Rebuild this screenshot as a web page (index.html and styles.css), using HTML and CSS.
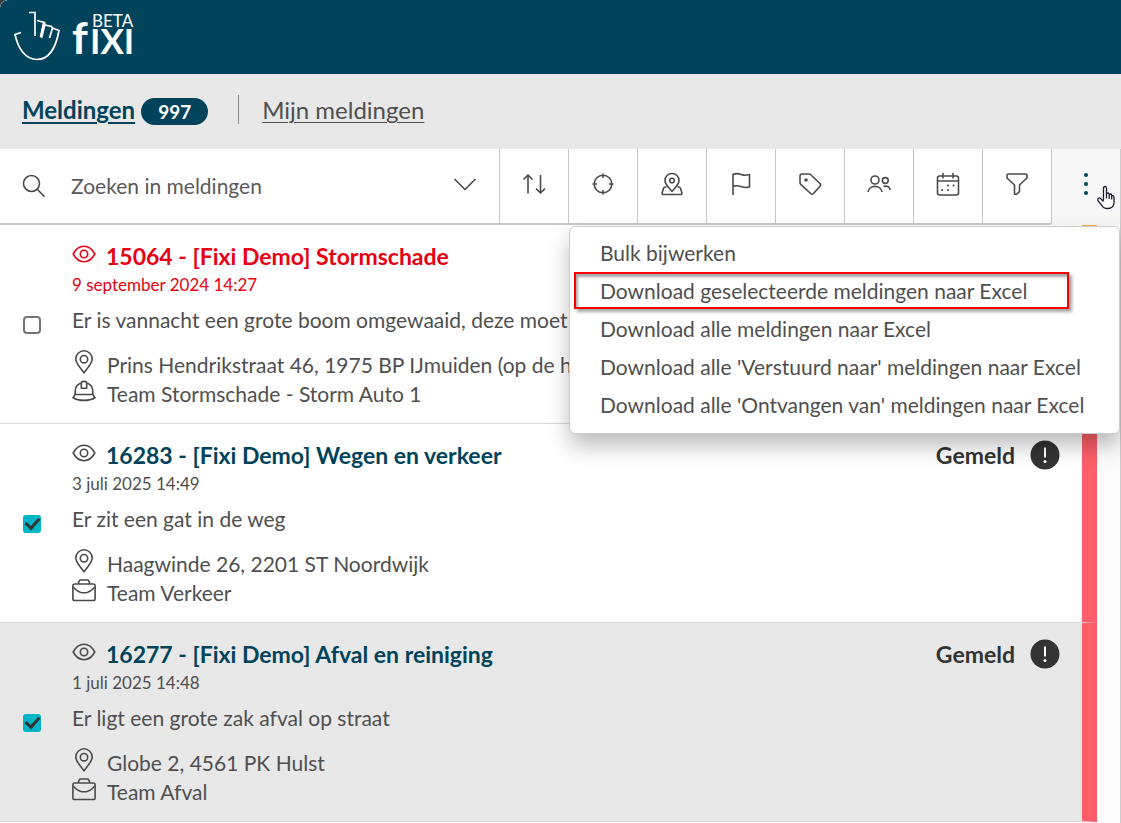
FILE: index.html
```html
<!DOCTYPE html>
<html lang="nl">
<head>
<meta charset="utf-8">
<meta name="viewport" content="width=device-width, initial-scale=1">
<title>Fixi - Meldingen</title>
<link rel="stylesheet" href="styles.css">
</head>
<body>
<svg width="0" height="0" class="sprite" aria-hidden="true">
  <symbol id="eye" viewBox="0 0 24 24"><path d="M1.2 12C4 6.800 8 4.300 12 4.300S20 6.800 22.800 12C20 17.200 16 19.700 12 19.700S4 17.200 1.200 12Z"/><circle cx="12" cy="12" r="3.700"/></symbol>
  <symbol id="pin" viewBox="0 0 24 24"><path d="M12 22.800C9 18.300 3.800 13.600 3.800 9A8.200 8.200 0 0 1 20.200 9C20.200 13.600 15 18.300 12 22.800Z"/><circle cx="12" cy="9.200" r="3.700"/></symbol>
  <symbol id="helmet" viewBox="0 0 24 24"><path d="M3.200 15.500V12.500A8.800 8.800 0 0 1 9.500 4M14.500 4A8.800 8.800 0 0 1 20.800 12.500V15.500M9.300 9.300V3.200Q12 1.500 14.700 3.200V9.300ZM3.200 15.500H20.800L23 18.700C17 22.300 7 22.300 1 18.700Z"/></symbol>
  <symbol id="bag" viewBox="0 0 24 24"><rect x=".9" y="6" width="22.200" height="16.500" rx="1.800"/><path d="M6.500 6V4.200L8 2H16L17.500 4.200V6M1 9C4 12 8 14.700 10 14.700H14C16 14.700 20 12 23 9"/></symbol>
  <symbol id="alert" viewBox="0 0 30 30"><circle cx="15" cy="15" r="14.500" fill="#333" stroke="none"/><path d="M15 7.500V17.500" stroke="#fff" stroke-width="2"/><circle cx="15" cy="21.500" r="1.500" fill="#fff" stroke="none"/></symbol>
</svg>

<header class="header">
  <svg class="logo" viewBox="0 0 124 52" role="img" aria-label="Fixi beta">
    <path d="M8 21.500L2 23.500C5 37 12 48.500 24 48.500S43 36 46 19.500L39.500 17L36.500 27M39.500 17L38.500 15.500L31.800 14L28.500 27M31.800 14L31.500 11.500L24 9.500M30.500 12L27.500 26M22 25V1.500H16" />
    <text class="logo-f" x="59" y="43">f</text>
    <text class="logo-ixi" x="77" y="43">IXI</text>
    <text class="logo-beta" x="79" y="16">BETA</text>
  </svg>
</header>

<nav class="tabs">
  <a class="tab tab-active" href="#meldingen">Meldingen</a>
  <span class="count">997</span>
  <a class="tab tab-other" href="#mijn">Mijn meldingen</a>
</nav>

<main class="panel">
  <div class="toolbar">
    <div class="search">
      <svg class="icon" viewBox="0 0 24 24" aria-hidden="true"><circle cx="9.500" cy="9.500" r="8"/><path d="M15.300 15.300L22.500 22.800"/></svg>
      <input class="search-input" type="text" aria-label="Zoeken in meldingen" placeholder="Zoeken in meldingen">
      <button class="expand" type="button" aria-label="Zoekopties"><svg class="icon" viewBox="0 0 24 24"><path d="M1.500 7L12 17.500L22.500 7"/></svg></button>
    </div>
    <button class="tool" type="button" aria-label="Sorteren"><svg class="icon" viewBox="0 0 24 24"><path d="M6 21.500V3M1.500 7.500L6 3L10.500 7.500M18.500 3V21M14 16.700L18.500 21L23 16.700"/></svg></button>
    <button class="tool" type="button" aria-label="Locatie"><svg class="icon" viewBox="0 0 24 24"><circle cx="12" cy="12" r="8.800"/><path d="M12 1.500V6M12 18V22.500M1.500 12H6M18 12H22.500"/></svg></button>
    <button class="tool" type="button" aria-label="Gebied"><svg class="icon" viewBox="0 0 24 24"><path d="M12 19.500C9 16 5 12.500 5 8.500A7 7 0 0 1 19 8.500C19 12.500 15 16 12 19.500Z"/><circle cx="12" cy="8.500" r="2.300"/><path d="M6.500 15H5.200Q4 15 3.600 16L2.200 20.500Q1.800 22.500 3.500 22.500H20.500Q22.200 22.500 21.800 20.500L20.400 16Q20 15 18.800 15H17.500"/></svg></button>
    <button class="tool" type="button" aria-label="Status"><svg class="icon" viewBox="0 0 24 24"><path d="M4 23V2.500C8 .5 11 2 13 2.700S17 3.500 20.500 2.500V15C17 16 15 15.500 12.500 14.700S8 13 4 14.500"/></svg></button>
    <button class="tool" type="button" aria-label="Categorie"><svg class="icon" viewBox="0 0 24 24"><path d="M2 4Q2 2 4 2H11Q12 2 13 3L22 11.500Q23.200 13 22 14.200L15.500 21.500Q14 23 12.600 21.500L3 12.700Q2 11.800 2 10.500Z"/><circle cx="8" cy="8" r="1" class="dot"/></svg></button>
    <button class="tool" type="button" aria-label="Behandelaars"><svg class="icon" viewBox="0 0 24 24"><circle cx="8" cy="8" r="4"/><circle cx="18.300" cy="8.500" r="2.900"/><path d="M1 20C2 12.500 14 12.500 15 20M16.500 14.500C20 13.500 22.500 14.500 23.200 18"/></svg></button>
    <button class="tool" type="button" aria-label="Datum"><svg class="icon" viewBox="0 0 24 24"><rect x="1.500" y="4" width="21" height="19" rx="2"/><path d="M1.500 9H22.500M7 1V6.500M17 1V6.500"/><path class="dots" d="M12 13.500H12.100M17.500 13.500H17.600M6 18H6.100M12 18H12.100"/></svg></button>
    <button class="tool" type="button" aria-label="Filter"><svg class="icon" viewBox="0 0 24 24"><path d="M3.500 2H20.500Q22 2 22 3.500V6L14.500 13V19.500L11.500 22.300H9.500V13L2 6V3.500Q2 2 3.500 2Z"/></svg></button>
    <button class="tool tool-more" type="button" aria-label="Meer acties" aria-expanded="true"><svg class="icon more" viewBox="0 0 24 24"><circle cx="12" cy="3" r="2"/><circle cx="12" cy="12" r="2"/><circle cx="12" cy="21" r="2"/></svg></button>
    <svg class="cursor" viewBox="0 0 18 24" aria-hidden="true"><path d="M6.500 15V3Q6.500 1 8 1T9.500 3V10V8.500Q9.500 7.500 10.800 7.500T12.200 9V10.500V9.500Q12.300 8.500 13.500 8.500T14.700 10V11Q15 10 16 10.200T17 12V17Q17 23 10.500 23Q6.500 23 5 20L1.200 15.500Q.3 13.500 1.500 12.700T4 13.500L6.500 16M9.500 9V13M12.200 10V13.500M14.700 11V14"/></svg>
    <div class="menu">
      <button class="menu-item" type="button">Bulk bijwerken</button>
      <button class="menu-item menu-item-marked" type="button">Download geselecteerde meldingen naar Excel</button>
      <button class="menu-item" type="button">Download alle meldingen naar Excel</button>
      <button class="menu-item" type="button">Download alle 'Verstuurd naar' meldingen naar Excel</button>
      <button class="menu-item" type="button">Download alle 'Ontvangen van' meldingen naar Excel</button>
    </div>
  </div>

  <div class="list">
    <article class="row row-late">
      <input class="check" type="checkbox" aria-label="Selecteer melding 15064">
      <div class="body">
        <h2 class="title"><svg class="icon"><use href="#eye"/></svg><a class="title-link" href="#15064">15064 - [Fixi Demo] Stormschade</a></h2>
        <p class="date">9 september 2024 14:27</p>
        <p class="desc">Er is vannacht een grote boom omgewaaid, deze moet</p>
        <p class="place"><svg class="icon"><use href="#pin"/></svg>Prins Hendrikstraat 46, 1975 BP IJmuiden (op de ho</p>
        <p class="team"><svg class="icon"><use href="#helmet"/></svg>Team Stormschade - Storm Auto 1</p>
      </div>
    </article>
    <article class="row">
      <input class="check" type="checkbox" checked aria-label="Selecteer melding 16283">
      <div class="body">
        <h2 class="title"><svg class="icon"><use href="#eye"/></svg><a class="title-link" href="#16283">16283 - [Fixi Demo] Wegen en verkeer</a></h2>
        <p class="date">3 juli 2025 14:49</p>
        <p class="desc">Er zit een gat in de weg</p>
        <p class="place"><svg class="icon"><use href="#pin"/></svg>Haagwinde 26, 2201 ST Noordwijk</p>
        <p class="team"><svg class="icon"><use href="#bag"/></svg>Team Verkeer</p>
      </div>
      <div class="status">Gemeld<svg class="alert"><use href="#alert"/></svg></div>
    </article>
    <article class="row row-selected">
      <input class="check" type="checkbox" checked aria-label="Selecteer melding 16277">
      <div class="body">
        <h2 class="title"><svg class="icon"><use href="#eye"/></svg><a class="title-link" href="#16277">16277 - [Fixi Demo] Afval en reiniging</a></h2>
        <p class="date">1 juli 2025 14:48</p>
        <p class="desc">Er ligt een grote zak afval op straat</p>
        <p class="place"><svg class="icon"><use href="#pin"/></svg>Globe 2, 4561 PK Hulst</p>
        <p class="team"><svg class="icon"><use href="#bag"/></svg>Team Afval</p>
      </div>
      <div class="status">Gemeld<svg class="alert"><use href="#alert"/></svg></div>
    </article>
  </div>
</main>
</body>
</html>
```
FILE: styles.css
```css
* { box-sizing: border-box; }

html { background: #3a3d40; }

body {
  margin: 0;
  min-height: 100vh;
  display: flex;
  flex-direction: column;
  overflow: hidden;
  background: #fff;
  color: #4f4f4f;
  font-family: Lato, "Open Sans", sans-serif;
  font-size: 21px;
  border-top-left-radius: 8px;
}

button, input { font: inherit; color: inherit; }
button { padding: 0; border: 0; background: none; cursor: pointer; }
h2, p { margin: 0; }
.sprite { position: absolute; }

.icon {
  flex: none;
  width: 24px;
  height: 24px;
  fill: none;
  stroke: #4a4a4a;
  stroke-width: 1.6;
  stroke-linejoin: round;
}

.header {
  flex: none;
  height: 74px;
  padding: 11px 13px;
  background: #00435b;
  border-top-left-radius: 8px;
}
.logo { display: block; width: 124px; height: 52px; fill: none; stroke: #fff; stroke-width: 1.7; }
.logo text { fill: #fff; stroke: none; }
.logo-f { font-size: 44px; font-weight: 700; }
.logo-ixi { font-size: 35px; font-weight: 700; }
.logo-beta { font-size: 17px; }

.tabs {
  flex: none;
  display: flex;
  align-items: center;
  height: 75px;
  padding: 0 22px 4px;
  background: #e8e8e8;
}
.tab { font-size: 24px; color: #4f4f4f; text-decoration-thickness: 1px; text-underline-offset: 3px; }
.tab-active { color: #00435b; font-weight: 700; text-decoration-thickness: 2px; }
.count {
  margin-left: 6px;
  margin-top: 4px;
  width: 67px;
  border-radius: 14px;
  background: #00435b;
  color: #fff;
  font-size: 19px;
  font-weight: 700;
  line-height: 27px;
  text-align: center;
}
.tab-other { margin-left: 30px; padding-left: 23px; border-left: 1px solid #8a8a8a; }

.panel { flex: 1; border-right: 1px solid #ccc; background: #fbfbfb; }

.toolbar { position: relative; display: flex; height: 76px; }
.search {
  flex: 1;
  display: flex;
  align-items: center;
  padding: 0 22px;
  background: #fff;
  border-bottom: 2px solid #c8c8c8;
}
.search-input { flex: 1; min-width: 0; margin-left: 25px; padding: 0 0 2px; border: 0; outline: 0; background: none; }
.search-input::placeholder { color: #5a5a5a; opacity: 1; }
.expand { display: flex; padding-bottom: 4px; }
.tool {
  flex: 0 0 69px;
  display: flex;
  align-items: center;
  justify-content: center;
  padding-bottom: 4px;
  background: #fff;
  border-left: 1px solid #c8c8c8;
  border-bottom: 2px solid #c8c8c8;
}
.dot { fill: #4a4a4a; }
.dots { stroke-width: 2; stroke-linecap: round; }
.tool-more { background: #f6f6f6; border-bottom-color: #f6f6f6; }
.more { fill: #00435b; stroke: none; }
.cursor {
  position: absolute;
  top: 36px;
  right: 5px;
  width: 18px;
  height: 25px;
  fill: #fff;
  stroke: #1b1b2b;
  stroke-width: 1.3;
}

.menu {
  position: absolute;
  z-index: 2;
  top: 77px;
  right: 0;
  width: 551px;
  padding: 7px 0 9px;
  border: 1px solid #ccc;
  border-radius: 6px;
  background: #fff;
  box-shadow: 0 12px 22px -1px rgba(0, 0, 0, .28);
}
.menu-item { position: relative; display: block; width: 100%; height: 38px; padding: 0 0 1px 30px; text-align: left; white-space: nowrap; }
.menu-item-marked::after {
  content: "";
  position: absolute;
  inset: 0 50px 1px 4px;
  border: 2px solid #f00;
  box-shadow: 3px 3px 3px rgba(0, 0, 0, .35), inset 2px 3px 3px rgba(0, 0, 0, .35);
}

.list { margin-right: 23px; }
.row {
  display: flex;
  align-items: center;
  padding: 16px 22px 15px 23px;
  background: #fff;
  border-right: 15px solid #fc5f69;
  border-bottom: 1px solid #d9d9d9;
}
.row-late { border-right-color: #ffab45; }
.row-selected { background: #e8e8e8; }

.check {
  flex: none;
  appearance: none;
  width: 18px;
  height: 18px;
  margin: 0;
  border: 2px solid #767676;
  border-radius: 4px;
  background: #fff;
}
.check:checked { display: grid; place-items: center; border: 0; border-radius: 3px; background: #00b5c8; }
.check:checked::after {
  content: "";
  width: 6px;
  height: 11px;
  margin-bottom: 4px;
  border: solid #333;
  border-width: 0 3px 3px 0;
  transform: rotate(42deg);
}

.body { flex: 1; min-width: 0; margin-left: 31px; white-space: nowrap; overflow: hidden; }
.title { display: flex; align-items: center; gap: 10px; line-height: 30px; font-size: 23px; }
.title .icon { margin-bottom: 4px; }
.title-link { color: #00435b; text-decoration: none; }
.date { font-size: 17px; line-height: 28px; }
.desc { margin-top: 7px; line-height: 28px; }
.place, .team { display: flex; align-items: center; gap: 11px; }
.place { margin-top: 16px; line-height: 30px; }
.team { line-height: 28px; }
.place .icon, .team .icon { margin: -3px 0 3px; }
.row-late .title-link, .row-late .date { color: #e60012; }
.row-late .title .icon { stroke: #e60012; }

.status {
  align-self: flex-start;
  display: flex;
  align-items: center;
  gap: 15px;
  color: #333;
  font-size: 23px;
  font-weight: 700;
  line-height: 30px;
}
.alert { width: 30px; height: 30px; }
```
